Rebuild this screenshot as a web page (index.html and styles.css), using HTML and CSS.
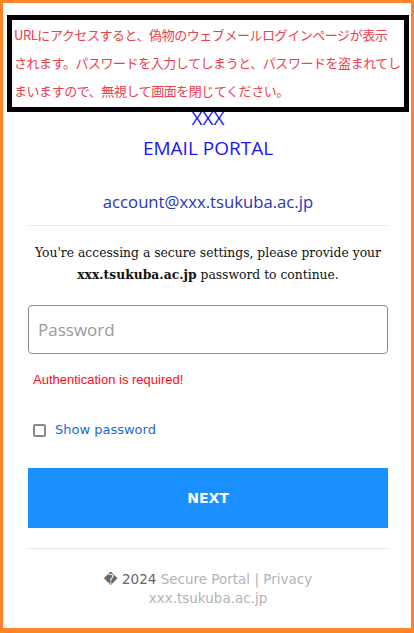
FILE: index.html
```html
<!DOCTYPE html>
<html lang="ja">
<head>
<meta charset="utf-8">
<title>EMAIL PORTAL</title>
<link rel="stylesheet" href="styles.css">
</head>
<body>
<div class="frame">
  <div class="warning">URLにアクセスすると、偽物のウェブメールログインページが表示<br>されます。パスワードを入力してしまうと、パスワードを盗まれてし<br>まいますので、無視して画面を閉じてください。</div>
  <main class="content">
    <h1 class="brand"><span>XXX</span><span>EMAIL PORTAL</span></h1>
    <div class="account">account@xxx.tsukuba.ac.jp</div>
    <hr class="rule">
    <p class="notice">You're accessing a secure settings, please provide your <b>xxx.tsukuba.ac.jp</b> password to continue.</p>
    <input class="password" type="password" placeholder="Password">
    <div class="error">Authentication is required!</div>
    <label class="show"><span class="box"></span><span>Show password</span></label>
    <button class="next" type="button">NEXT</button>
    <hr class="rule rule-foot">
    <footer class="foot">
      <div><span class="dark">&#xFFFD; 2024</span> Secure Portal | Privacy</div>
      <div>xxx.tsukuba.ac.jp</div>
    </footer>
  </main>
</div>
</body>
</html>
```
FILE: styles.css
```css
* { box-sizing: border-box; }
html, body { margin: 0; padding: 0; background: #fff; }
.frame {
  position: relative;
  height: 633px;
  border: 3px solid #ff8429;
  border-bottom-width: 5px;
  background: #fff;
  overflow: hidden;
}
.warning {
  position: absolute;
  top: 12px;
  left: 4px;
  right: 2px;
  height: 97px;
  border: 5px solid #000;
  background: #fff;
  color: #ea3f4c;
  font-family: "Noto Sans CJK JP", sans-serif;
  font-size: 13px;
  letter-spacing: -0.45px;
  line-height: 28px;
  padding: 1px 2px 0 2px;
  white-space: nowrap;
  z-index: 2;
}
.content {
  padding: 100px 23px 0 25px;
  display: flex;
  flex-direction: column;
}
.brand {
  margin: 0;
  display: flex;
  flex-direction: column;
  align-items: center;
  font-family: "Open Sans", sans-serif;
  font-weight: 400;
  font-size: 19px;
  line-height: 30px;
  color: #1a16f5;
}
.account {
  margin-top: 27px;
  text-align: center;
  font-family: "Open Sans", sans-serif;
  font-size: 16.7px;
  line-height: 24px;
  color: #1f36b8;
}
.rule {
  margin: 11px 0 0;
  border: 0;
  border-top: 1px solid #e8e8e8;
  height: 0;
}
.notice {
  margin: 17px 0 0;
  text-align: center;
  font-family: "DejaVu Serif", serif;
  font-size: 12.35px;
  line-height: 21px;
  color: #111;
}
.notice b { font-weight: 700; }
.password {
  margin-top: 19px;
  height: 49px;
  width: 100%;
  border: 1px solid #8a8a8a;
  border-radius: 4px;
  padding: 0 9px;
  font-family: "Open Sans", sans-serif;
  font-size: 17px;
  color: #333;
  outline: none;
}
.password::placeholder { color: #9a9a9a; }
.error {
  margin-top: 18px;
  padding-left: 5px;
  font-family: "Liberation Sans", Arial, sans-serif;
  font-size: 13px;
  line-height: 16px;
  color: #ff0a1a;
}
.show {
  margin-top: 33px;
  padding-left: 5px;
  display: flex;
  align-items: center;
  gap: 9px;
  font-family: "DejaVu Sans", sans-serif;
  font-size: 13px;
  line-height: 18px;
  color: #1a6ad6;
}
.box {
  width: 13px;
  height: 13px;
  border: 2px solid #888894;
  border-radius: 2px;
  background: #fff;
}
.next {
  margin-top: 29px;
  height: 60px;
  width: 100%;
  border: 0;
  background: #1a8fff;
  color: #fff;
  font-family: "DejaVu Sans", sans-serif;
  font-weight: 700;
  font-size: 14px;
}
.rule-foot { margin-top: 20px; }
.foot {
  margin-top: 21px;
  text-align: center;
  font-family: "DejaVu Sans", sans-serif;
  font-size: 13.5px;
  line-height: 19px;
  color: #b3b3b3;
}
.dark { color: #666; }
```
